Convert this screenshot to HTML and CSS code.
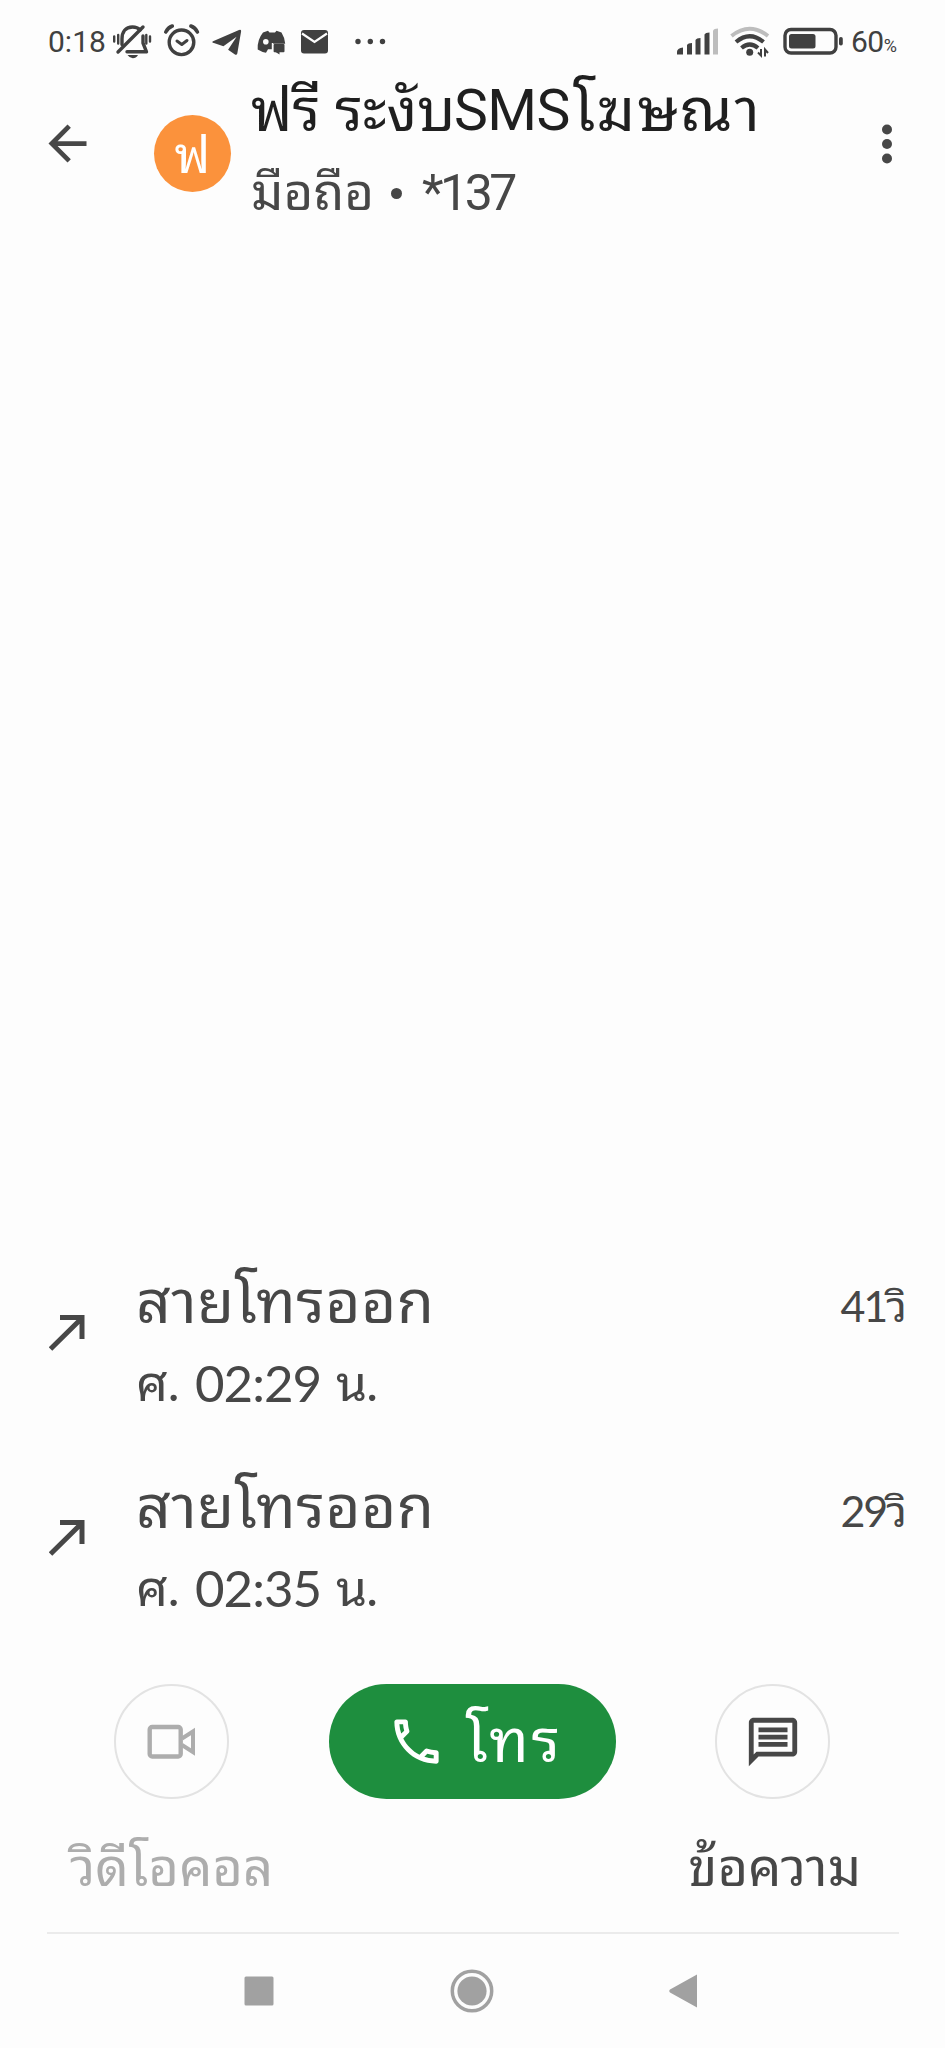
FILE: index.html
```html
<!DOCTYPE html>
<html lang="th">
<head>
<meta charset="utf-8">
<title>ฟรี ระงับSMSโฆษณา</title>
<link rel="stylesheet" href="styles.css">
</head>
<body>
<div class="screen">
  <div class="status">
    <span class="clock">0:18</span>
    <svg class="status-icons" width="290" height="40" viewBox="110 20 290 40">
      <g fill="none" stroke="#404040" stroke-width="3.4" stroke-linejoin="round" stroke-linecap="round">
        <path d="M122 44.500V39c0-7 3.500-12 10.500-12 3.500 0 6 1.200 7.600 3M143 36v7l3.500 8.800H127"/>
        <path d="M143 27L118 52"/>
        <path d="M114.200 36.500v5M118.200 35v8.500M150 36.500v5M146.300 35v8.500" stroke-width="2.400"/>
        <circle cx="181.500" cy="42.300" r="12.300"/>
        <path d="M177 41l4.800 3.500 5.200-4" stroke-width="3"/>
        <path d="M165.800 32q2.200-4.500 6.500-6M197.400 32q-2.200-4.500-6.500-6" stroke-width="3.600"/>
      </g>
      <g fill="#404040">
        <path d="M127.500 55h10.500q-2 3.200-5.200 3.200t-5.300-3.200z"/>
        <path d="M213 41.200l26-11.200q2.500-1 2.100 1.500L237.300 53.500q-.6 2.200-2.700.8l-6.500-4.600 8.500-13-13.200 9.500-9.500-3.200q-2.600-.8-.9-1.800z"/>
        <path d="M263 32.500l5-1.700 1.500 1.800h5.500l1.500-1.800 5 1.700q3.200 5 3.700 11.300H273v5.500h-5l-2 3.500q-4-.8-8.300-3.400-.6-9.600 5.300-16.900z"/>
        <rect x="273.500" y="44" width="11" height="8.300" rx="1"/><path d="M275.500 52h4v2.500z"/>
        <rect x="301" y="30" width="27" height="23.500" rx="3"/>
        <circle cx="358" cy="41.500" r="2.700"/><circle cx="370.300" cy="41.500" r="2.700"/><circle cx="382.500" cy="41.500" r="2.700"/>
      </g>
      <circle cx="265.800" cy="41.800" r="2.800" fill="#fdfdfd"/><path d="M272.500 43v9" stroke="#fdfdfd" stroke-width="1.400"/>
      <path d="M302 33.500l12.500 8.500L327 33.500" fill="none" stroke="#fdfdfd" stroke-width="2.200"/>
    </svg>
    <svg class="signal-icons" width="176" height="40" viewBox="672 20 176 40">
      <g fill="#404040">
        <path d="M677 54.500v-2.500q0-4 6-4.500v7zM687 54.500V45q1-2 5-2v11.500zM695.500 54.500V40q1-2 5-2v16.500zM704.500 54.500V34.500q1-2 5-2v22z"/>
        <circle cx="749.700" cy="52.300" r="3.500"/>
        <rect x="789" y="34" width="26.500" height="14.500" rx="2.500"/>
        <rect x="839" y="37" width="3.800" height="8.500" rx="1.800"/>
      </g>
      <path d="M713 54.500V30.500q1-2 5-2v26z" fill="#bdbdbd"/>
      <path d="M731.500 36q18-14.500 36.500 0" fill="none" stroke="#bdbdbd" stroke-width="4"/>
      <path d="M736 42q13.700-11.500 27.500 0M741.500 48q8.200-7 16.500 0" fill="none" stroke="#404040" stroke-width="4.200"/>
      <path d="M761 49v6.500l-3-3M765 56.500v-7l3 3.500" fill="none" stroke="#404040" stroke-width="2"/>
      <rect x="785" y="29.500" width="51" height="23.500" rx="6" fill="none" stroke="#404040" stroke-width="3.400"/>
    </svg>
    <span class="battery">60<small>%</small></span>
  </div>

  <header class="header">
    <svg class="back" width="57" height="57" viewBox="0 0 24 24"><path fill="#474747" d="M20 11H7.830l5.590-5.590L12 4l-8 8 8 8 1.410-1.410L7.830 13H20z"/></svg>
    <div class="avatar"><span>ฟ</span></div>
    <div class="contact">
      <div class="name"><span class="t1">ฟรี ระงับ</span><span class="t2">SMS</span><span class="t3">โฆษณา</span></div>
      <div class="number"><span class="n1">มือถือ</span><i class="dot"></i><span class="n2">*137</span></div>
    </div>
    <svg class="more" width="12" height="42" viewBox="0 0 12 42" fill="#474747"><circle cx="6" cy="6.500" r="5"/><circle cx="6" cy="21" r="5"/><circle cx="6" cy="35.500" r="5"/></svg>
  </header>

  <main class="calls">
    <div class="call">
      <svg class="out" width="36" height="36" viewBox="0 0 36 36"><path d="M1.500 34L33 3M11 2.500H33V24" fill="none" stroke="#474747" stroke-width="5"/></svg>
      <div class="info"><div class="kind"><span>สายโทรออก</span></div><div class="time"><span class="day">ศ.</span><span class="digits">02:29</span><span class="unit">น.</span></div></div>
      <div class="duration"><b>41</b><span>วิ</span></div>
    </div>
    <div class="call">
      <svg class="out" width="36" height="36" viewBox="0 0 36 36"><path d="M1.500 34L33 3M11 2.500H33V24" fill="none" stroke="#474747" stroke-width="5"/></svg>
      <div class="info"><div class="kind"><span>สายโทรออก</span></div><div class="time"><span class="day">ศ.</span><span class="digits">02:35</span><span class="unit">น.</span></div></div>
      <div class="duration"><b>29</b><span>วิ</span></div>
    </div>
  </main>

  <footer class="actions">
    <div class="buttons">
      <div class="round"><svg width="49" height="36" viewBox="0 0 49 36" fill="none" stroke="#adadad" stroke-width="4.400"><rect x="2.700" y="3" width="31" height="29.500" rx="2.500"/><path d="M35 14.500L46 7.500V28L35 21" stroke-width="4"/></svg></div>
      <div class="pill"><svg width="59" height="59" viewBox="0 0 24 24" fill="#fff"><path d="M6.540 5c.060.890.210 1.760.450 2.590l-1.200 1.200c-.410-1.200-.670-2.470-.760-3.790h1.510m9.860 12.020c.850.240 1.720.390 2.600.450v1.490c-1.320-.090-2.590-.350-3.800-.750l1.200-1.190M7.500 3H4c-.550 0-1 .450-1 1 0 9.390 7.610 17 17 17 .550 0 1-.450 1-1v-3.490c0-.550-.450-1-1-1-1.240 0-2.450-.200-3.570-.570-.100-.040-.210-.050-.310-.050-.260 0-.510.100-.710.290l-2.200 2.200c-2.830-1.450-5.150-3.760-6.590-6.590l2.200-2.200c.280-.280.360-.670.250-1.020C8.700 6.450 8.500 5.250 8.500 4c0-.550-.450-1-1-1z"/></svg><span>โทร</span></div>
      <div class="round"><svg width="58" height="58" viewBox="0 0 24 24" fill="#474747"><path d="M4 4h16v12H5.170L4 17.170V4m0-2c-1.100 0-1.990.900-1.990 2L2 22l4-4h14c1.100 0 2-.900 2-2V4c0-1.100-.900-2-2-2H4zm2 10h12v2H6v-2zm0-3h12v2H6V9zm0-3h12v2H6V6z"/></svg></div>
    </div>
    <div class="labels"><span class="l1">วิดีโอคอล</span><span class="l2">ข้อความ</span></div>
  </footer>

  <nav class="nav">
    <svg width="30" height="30" viewBox="0 0 30 30"><rect x=".5" y=".5" width="29" height="29" rx="1.500" fill="#a1a1a1"/></svg>
    <svg width="44" height="44" viewBox="0 0 44 44"><circle cx="22" cy="22" r="19.700" fill="none" stroke="#a1a1a1" stroke-width="3.500"/><circle cx="22" cy="22" r="14.600" fill="#a1a1a1"/></svg>
    <svg width="28" height="34" viewBox="0 0 28 34"><path d="M28 .5v33L1 18.500q-1.500-1.500 0-3z" fill="#a1a1a1"/></svg>
  </nav>
</div>
</body>
</html>
```
FILE: styles.css
```css
* { box-sizing: border-box; }
body { margin: 0; background: #fdfdfd; font-family: Roboto, "Noto Sans Thai Looped", "Noto Looped Thai", "Droid Sans Thai", Loma, Waree, Garuda, "Noto Sans Thai", sans-serif; color: #474747; }
.screen { width: 945px; height: 2048px; overflow: hidden; display: flex; flex-direction: column; }
.screen > * { flex: none; }
svg { display: block; flex: none; }
span { white-space: nowrap; }

.status { height: 72px; padding: 20px 0 0 48px; display: flex; align-items: flex-start; color: #404040; }
.clock { width: 62px; font-size: 30px; line-height: 44px; }
.signal-icons { margin-left: 272px; }
.battery { margin-left: 3px; font-size: 30px; line-height: 44px; letter-spacing: -.5px; }
.battery small { font-size: 18px; }

.header { height: 156px; display: flex; align-items: flex-start; }
.back { margin: 43px 0 0 39px; }
.avatar { width: 77px; height: 77px; margin: 43px 0 0 58px; border-radius: 50%; background: #fb923c; color: #fff; font-size: 51px; line-height: 81px; text-align: center; }
.contact { width: 620px; margin-left: 20px; }
.name { height: 78px; display: flex; font-size: 57px; line-height: 78px; color: #1f1f1f; }
.t1 { width: 203px; font-size: 59px; }
.t2 { width: 119px; letter-spacing: -.5px; }
.t3 { font-size: 60px; letter-spacing: 2px; }
.number { height: 86px; display: flex; font-size: 50px; line-height: 86px; }
.n1 { width: 120px; font-size: 51px; }
.n2 { letter-spacing: -3.500px; }
.dot { width: 11px; height: 11px; margin: 38px 20px 0 20px; border-radius: 50%; background: #474747; }
.more { margin: 51px 0 0 10px; }

.calls { margin-top: 1024px; }
.call { height: 205px; display: flex; padding: 0 38px 0 49px; }
.out { margin-top: 63px; }
.info { margin-left: 51px; }
.kind { height: 90px; font-size: 60.500px; line-height: 101px; letter-spacing: .4px; }
.time { display: flex; font-family: Lato, "Noto Sans Thai Looped", "Noto Looped Thai", "Droid Sans Thai", Loma, Waree, Garuda, "Noto Sans Thai", sans-serif; font-size: 51px; line-height: 81px; }
.day { width: 59px; font-size: 50px; }
.digits { width: 141px; letter-spacing: -1px; }
.unit { font-size: 50px; letter-spacing: -1px; }
.duration { margin-left: auto; display: flex; font-family: Lato, "Noto Sans Thai Looped", "Noto Looped Thai", "Droid Sans Thai", Loma, Waree, Garuda, "Noto Sans Thai", sans-serif; font-size: 43px; line-height: 107px; }
.duration b { font-weight: 400; letter-spacing: -2px; }

.actions { height: 250px; margin: 22px 46px 0 47px; border-bottom: 2px solid #ebebeb; }
.buttons { height: 115px; padding: 0 69px 0 67px; display: flex; justify-content: space-between; }
.round { width: 115px; height: 115px; border: 2.500px solid #e3e3e3; border-radius: 50%; display: flex; align-items: center; justify-content: center; }
.pill { width: 287px; height: 115px; border-radius: 58px; background: #1e8e3e; color: #fff; display: flex; align-items: center; padding-left: 58px; gap: 20px; font-size: 60.500px; line-height: 116px; letter-spacing: 2.500px; }
.labels { display: flex; justify-content: space-between; padding: 22px 38px 0 23px; font-size: 52.500px; line-height: 94px; }
.l1 { color: #adadad; }

.nav { display: flex; align-items: center; height: 114px; padding: 0 248px 0 244px; justify-content: space-between; }
```
